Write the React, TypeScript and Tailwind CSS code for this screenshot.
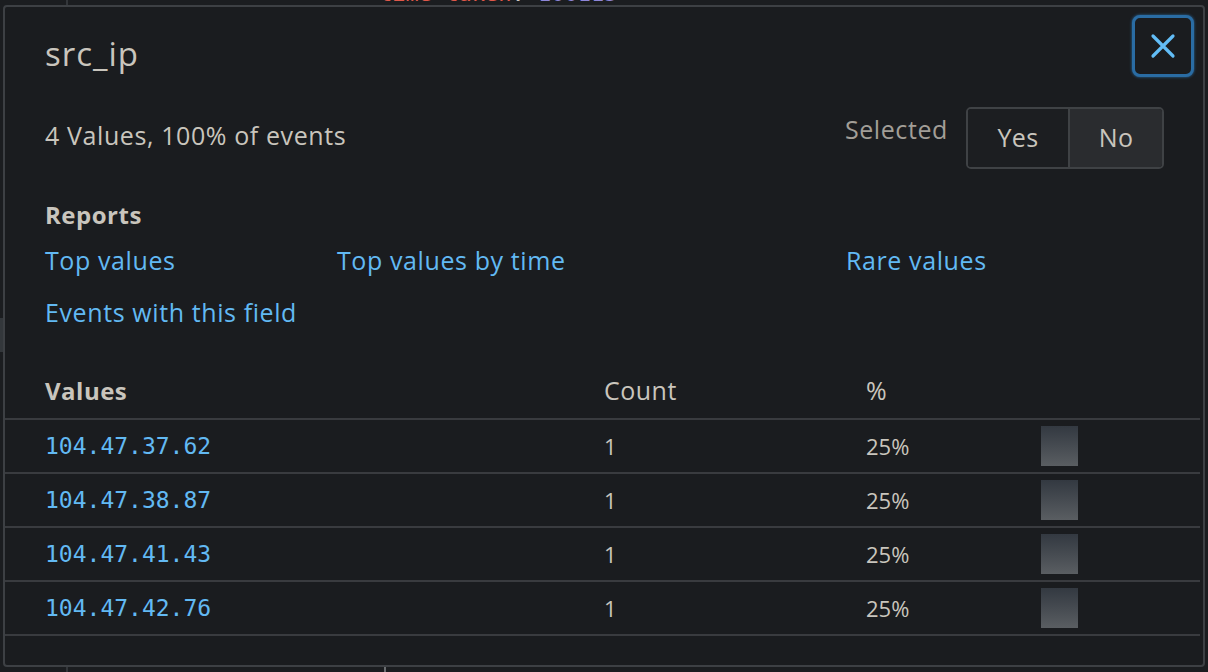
import React from 'react';

const rows = [
  { value: '104.47.37.62', count: 1, pct: '25%' },
  { value: '104.47.38.87', count: 1, pct: '25%' },
  { value: '104.47.41.43', count: 1, pct: '25%' },
  { value: '104.47.42.76', count: 1, pct: '25%' },
];

const sans = "font-['Open_Sans','Noto_Sans',sans-serif]";
const mono = "font-['DejaVu_Sans_Mono','Liberation_Mono',monospace]";

const FieldDialog = () => {
  return (
    <div className={`absolute left-[3px] top-[5px] w-[1202px] h-[662px] rounded-[4px] border-2 border-[#3d4044] bg-[#1a1c1f] ${sans} text-[#c9c5bd]`}>
      {/* Header */}
      <div className="flex items-start justify-between pl-[40px] pr-[9px] pt-[10px]">
        <h2 className="mt-[17px] text-[33px] leading-[40px] tracking-[1px]">src_ip</h2>
        <button className="-mt-[2px] flex h-[62px] w-[62px] items-center justify-center rounded-[8px] border-[3px] border-[#2a6ca3] bg-[#1a1c1f] shadow-[0_0_3px_#2a6ca3]">
          <svg width="26" height="26" viewBox="0 0 26 26" fill="none" stroke="#62bdf7" strokeWidth="3.2" strokeLinecap="round">
            <path d="M3 3 L23 23 M23 3 L3 23" />
          </svg>
        </button>
      </div>

      {/* Summary + selected toggle */}
      <div className="mt-[30px] flex items-center justify-between pl-[40px] pr-[39px]">
        <p className="-mt-[6px] text-[25px] leading-[30px] tracking-[0.6px]">4 Values, 100% of events</p>
        <div className="flex items-center gap-[18px]">
          <span className="-mt-[16px] text-[25px] tracking-[0.6px] text-[#a29e97]">Selected</span>
          <div className="flex h-[62px] overflow-hidden rounded-[5px] border-2 border-[#3f4245] text-[25px] tracking-[0.4px]">
            <button className="w-[100px] bg-[#1c1e21] text-[#c9c5bd]">Yes</button>
            <button className="w-[94px] border-l-2 border-[#3f4245] bg-[#2a2c2f] text-[#c9c5bd]">No</button>
          </div>
        </div>
      </div>

      {/* Reports */}
      <div className="mt-[32px] pl-[40px]">
        <h3 className="text-[24px] font-bold leading-[28px] tracking-[0.5px]">Reports</h3>
        <div className="mt-[16px] grid grid-cols-[292px_509px_1fr] gap-y-[22px] text-[25px] leading-[30px] tracking-[0.6px] text-[#62b9f3]">
          <a>Top values</a>
          <a>Top values by time</a>
          <a>Rare values</a>
          <a>Events with this field</a>
        </div>
      </div>

      {/* Values table */}
      <div className="mt-[37px] mr-[3px]">
        <div className="grid h-[56px] grid-cols-[559px_262px_175px_1fr] items-center border-b-2 border-[#393b3f] pl-[40px] text-[25px] tracking-[0.5px]">
          <span className="font-bold text-[24px]">Values</span>
          <span>Count</span>
          <span>%</span>
          <span />
        </div>
        {rows.map((r) => (
          <div key={r.value} className="grid h-[54px] grid-cols-[559px_262px_175px_1fr] items-center border-b-2 border-[#393b3f] pl-[40px] text-[22px]">
            <span className={`${mono} text-[23px] text-[#62b9f3]`}>{r.value}</span>
            <span>{r.count}</span>
            <span>{r.pct}</span>
            <span className="h-[40px] w-[37px] bg-gradient-to-b from-[#333941] to-[#5a5e62]" />
          </div>
        ))}
      </div>
    </div>
  );
};

export default function App() {
  return (
    <div className="relative h-[672px] w-[1208px] overflow-hidden bg-[#1b1d20]">
      {/* Page behind the dialog */}
      <div className="absolute inset-y-0 left-[66px] w-[2px] bg-[#33363a]" />
      <div className="absolute bottom-0 left-[384px] h-[8px] w-[2px] bg-[#6a6d70]" />
      <div className="absolute left-0 top-[318px] h-[34px] w-[6px] rounded-r-[3px] bg-[#33373b]" />
      <div className={`-mt-[18px] pl-[379px] ${mono} text-[22px] leading-[24px]`}>
        <span className="text-[#e0584a]">time_taken</span>
        <span className="text-[#c9c5bd]">: </span>
        <span className="text-[#8f86d8]">166115</span>
      </div>

      <FieldDialog />
    </div>
  );
}
